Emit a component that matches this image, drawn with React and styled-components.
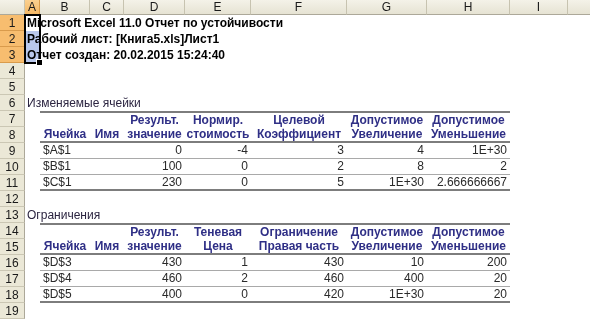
import React from "react";
import styled, { createGlobalStyle, css } from "styled-components";

const COL_WIDTHS = [15, 50, 34, 61, 66, 96, 80, 83, 58, 90];
const LETTERS = ["A", "B", "C", "D", "E", "F", "G", "H", "I", ""];
const TEMPLATE = `25px ${COL_WIDTHS.map((w) => w + "px").join(" ")}`;
const TABLE_TEMPLATE = COL_WIDTHS.slice(1, 8).map((w) => w + "px").join(" ");

const GlobalStyle = createGlobalStyle`
  html, body {
    margin: 0;
    padding: 0;
    background: #fff;
    overflow: hidden;
  }
  body {
    font-family: "Liberation Sans", Arial, sans-serif;
  }
`;

const Sheet = styled.div`
  position: relative;
  width: 590px;
  height: 319px;
  overflow: hidden;
  background: #fff;
  font-size: 12px;
`;

const ColumnBar = styled.div`
  display: grid;
  grid-template-columns: ${TEMPLATE};
  height: 15px;
`;

const ColHead = styled.div`
  box-sizing: border-box;
  height: 15px;
  display: flex;
  align-items: center;
  justify-content: center;
  font-size: 12px;
  color: #1a1a1a;
  background: ${(p) =>
    p.$selected
      ? "linear-gradient(#fbd08f, #f5b865)"
      : "linear-gradient(#f4f2e8, #e6e3d3)"};
  border-right: 1px solid ${(p) => (p.$selected ? "#d89a4a" : "#c7c3b0")};
  border-bottom: 1px solid #aca899;
`;

const Row = styled.div`
  display: grid;
  grid-template-columns: ${TEMPLATE};
  height: 16px;
`;

const RowNum = styled.div`
  box-sizing: border-box;
  height: 16px;
  display: flex;
  align-items: center;
  justify-content: center;
  font-size: 12px;
  color: #1a1a1a;
  background: ${(p) => (p.$selected ? "#f7bd6f" : "#ebe8d7")};
  border-bottom: 1px solid ${(p) => (p.$selected ? "#d99b4c" : "#cbc7b4")};
  border-right: 1px solid #aca899;
`;

const Spill = styled.div`
  grid-column: 2 / -1;
  padding-left: 2px;
  line-height: 16px;
  white-space: nowrap;
  color: ${(p) => (p.$bold ? "#000" : "#2b2440")};
  font-weight: ${(p) => (p.$bold ? 700 : 400)};
`;

const TableLine = styled.div`
  grid-column: 3 / 10;
  display: grid;
  grid-template-columns: ${TABLE_TEMPLATE};
  box-sizing: border-box;
  height: 16px;
  ${(p) => p.$top && css`border-top: 2px solid #7d7d7d;`}
  ${(p) => p.$bottom === "thick" && css`border-bottom: 2px solid #7d7d7d;`}
  ${(p) => p.$bottom === "thin" && css`border-bottom: 1px solid #a9a9a9;`}
`;

const HeadCell = styled.div`
  display: flex;
  align-items: flex-end;
  justify-content: center;
  line-height: 14px;
  white-space: nowrap;
  font-weight: 700;
  color: #2f2f86;
  overflow: visible;
`;

const DataCell = styled.div`
  display: flex;
  align-items: flex-end;
  justify-content: ${(p) => (p.$left ? "flex-start" : "flex-end")};
  padding: 0 3px;
  line-height: 15px;
  white-space: nowrap;
  color: #2a2a2a;
`;

const Selection = styled.div`
  position: absolute;
  left: 24px;
  top: 14px;
  width: 17px;
  height: 50px;
  box-sizing: border-box;
  border: 2px solid #000;
  display: flex;
  flex-direction: column;
  pointer-events: none;
`;

const ActiveCell = styled.div`
  height: 15px;
`;

const SelectedFill = styled.div`
  flex: 1;
  background: #b9c8ec;
  mix-blend-mode: multiply;
`;

const FillHandle = styled.div`
  position: absolute;
  right: -4px;
  bottom: -4px;
  width: 5px;
  height: 5px;
  background: #000;
  border: 1px solid #fff;
`;

const changing = {
  title: "Изменяемые ячейки",
  head: [
    ["", "", "Результ.", "Нормир.", "Целевой", "Допустимое", "Допустимое"],
    ["Ячейка", "Имя", "значение", "стоимость", "Коэффициент", "Увеличение", "Уменьшение"],
  ],
  rows: [
    ["$A$1", "", "0", "-4", "3", "4", "1E+30"],
    ["$B$1", "", "100", "0", "2", "8", "2"],
    ["$C$1", "", "230", "0", "5", "1E+30", "2.666666667"],
  ],
};

const limits = {
  title: "Ограничения",
  head: [
    ["", "", "Результ.", "Теневая", "Ограничение", "Допустимое", "Допустимое"],
    ["Ячейка", "Имя", "значение", "Цена", "Правая часть", "Увеличение", "Уменьшение"],
  ],
  rows: [
    ["$D$3", "", "430", "1", "430", "10", "200"],
    ["$D$4", "", "460", "2", "460", "400", "20"],
    ["$D$5", "", "400", "0", "420", "1E+30", "20"],
  ],
};

const Blank = ({ n }) => (
  <Row>
    <RowNum>{n}</RowNum>
  </Row>
);

const Report = ({ start, data }) => {
  const rows = [];
  rows.push(
    <Row key="t">
      <RowNum>{start}</RowNum>
      <Spill>{data.title}</Spill>
    </Row>
  );
  data.head.forEach((h, i) => (
    rows.push(
      <Row key={"h" + i}>
        <RowNum>{start + 1 + i}</RowNum>
        <div />
        <TableLine $top={i === 0} $bottom={i === 1 ? "thick" : undefined}>
          {h.map((t, j) => (
            <HeadCell key={j}>{t}</HeadCell>
          ))}
        </TableLine>
      </Row>
    )
  ));
  data.rows.forEach((r, i) => (
    rows.push(
      <Row key={"r" + i}>
        <RowNum>{start + 3 + i}</RowNum>
        <div />
        <TableLine $bottom={i === data.rows.length - 1 ? "thick" : "thin"}>
          {r.map((t, j) => (
            <DataCell key={j} $left={j === 0}>
              {t}
            </DataCell>
          ))}
        </TableLine>
      </Row>
    )
  ));
  return rows;
};

export default function App() {
  return (
    <>
      <GlobalStyle />
      <Sheet>
        <ColumnBar>
          <ColHead />
          {LETTERS.map((l, i) => (
            <ColHead key={i} $selected={l === "A"}>
              {l}
            </ColHead>
          ))}
        </ColumnBar>
        <Row>
          <RowNum $selected>1</RowNum>
          <Spill $bold>Microsoft Excel 11.0 Отчет по устойчивости</Spill>
        </Row>
        <Row>
          <RowNum $selected>2</RowNum>
          <Spill $bold>Рабочий лист: [Книга5.xls]Лист1</Spill>
        </Row>
        <Row>
          <RowNum $selected>3</RowNum>
          <Spill $bold>Отчет создан: 20.02.2015 15:24:40</Spill>
        </Row>
        <Blank n={4} />
        <Blank n={5} />
        <Report start={6} data={changing} />
        <Blank n={12} />
        <Report start={13} data={limits} />
        <Blank n={19} />
        <Selection>
          <ActiveCell />
          <SelectedFill />
          <FillHandle />
        </Selection>
      </Sheet>
    </>
  );
}
